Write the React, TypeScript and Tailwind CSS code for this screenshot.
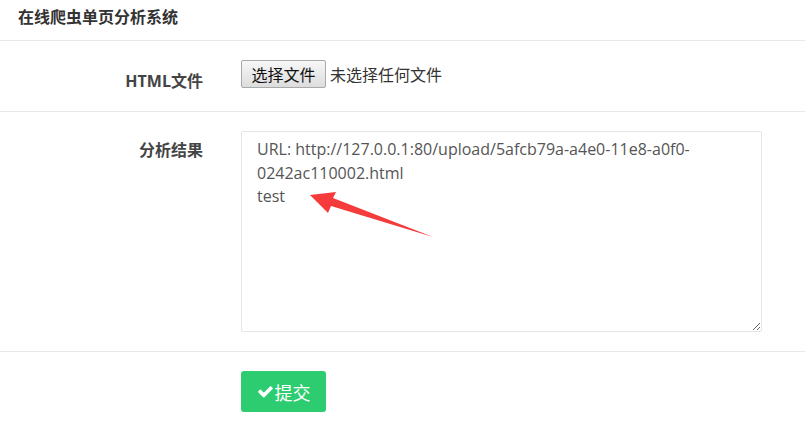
import React from "react";

export default function App() {
  const value =
    "URL: http://127.0.0.1:80/upload/5afcb79a-a4e0-11e8-a0f0-\n0242ac110002.html\ntest";
  return (
    <div className="relative w-[805px] h-[424px] overflow-hidden bg-white font-['Open_Sans','Noto_Sans_CJK_SC',sans-serif] text-[#333]">
      <div className="h-[41px] border-b border-[#e7e7ee] pl-[18px] pt-[7px]">
        <div className="text-[16px] leading-[20px] font-bold text-[#333]">在线爬虫单页分析系统</div>
      </div>

      <div className="flex h-[71px] border-b border-[#e7e7ee] pt-[19px]">
        <div className="w-[203px] text-right pt-[10px] text-[16px] leading-[23px] font-bold text-[#444]">
          HTML文件
        </div>
        <div className="ml-[38px] flex items-center h-[28px] gap-[4px]">
          <div className="h-[28px] w-[85px] flex items-center justify-center rounded-[2px] border border-[#a9a9a9] bg-gradient-to-b from-[#f7f7f7] to-[#dddddd] text-[16px] text-[#111] font-['Noto_Sans_CJK_SC',sans-serif] leading-none">
            选择文件
          </div>
          <span className="text-[16px] text-[#333] font-['Noto_Sans_CJK_SC',sans-serif] leading-none">未选择任何文件</span>
        </div>
      </div>

      <div className="flex h-[240px] border-b border-[#e7e7ee] pt-[19px]">
        <div className="w-[203px] text-right pt-[8px] text-[16px] leading-[23px] font-bold text-[#444]">
          分析结果
        </div>
        <textarea
          readOnly
          value={value}
          className="ml-[38px] w-[521px] h-[201px] rounded-[2px] border border-[#e5e6e7] px-[15px] pt-[6px] text-[16px] leading-[23.5px] text-[#555] font-['Open_Sans',sans-serif] outline-none resize"
        />
      </div>

      <div className="flex pt-[19px]">
        <div className="w-[203px]" />
        <button className="ml-[38px] w-[85px] h-[41px] rounded-[3px] bg-[#2ecc71] flex items-center justify-center gap-[1px] text-white text-[18px] leading-none font-['Noto_Sans_CJK_SC',sans-serif]">
          <svg width="17" height="17" viewBox="0 0 1792 1792" fill="white">
            <path d="M1671 566q0 40-28 68l-724 724-136 136q-28 28-68 28t-68-28l-136-136-362-362q-28-28-28-68t28-68l136-136q28-28 68-28t68 28l294 295 656-657q28-28 68-28t68 28l136 136q28 28 28 68z" />
          </svg>
          <span>提交</span>
        </button>
      </div>

      <svg className="absolute left-0 top-0 pointer-events-none" width="805" height="424">
        <polygon
          points="310,195 336,192 333,198 433,237 331,206 328,213"
          fill="#f53b3b"
        />
      </svg>
    </div>
  );
}
